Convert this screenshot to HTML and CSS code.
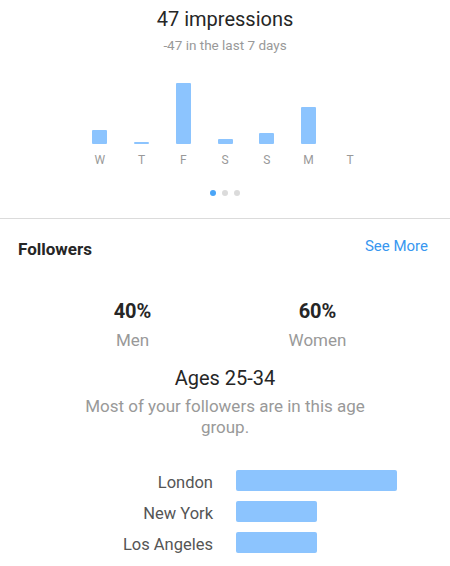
FILE: index.html
```html
<!DOCTYPE html>
<html>
<head>
<meta charset="utf-8">
<link rel="stylesheet" href="styles.css">
</head>
<body>
<section class="impressions">
  <h1 class="title">47 impressions</h1>
  <p class="subtitle">-47 in the last 7 days</p>
  <div class="chart">
    <div class="col"><div class="plot"><div class="bar" style="height:14px"></div></div><span class="day">W</span></div>
    <div class="col"><div class="plot"><div class="bar" style="height:2px"></div></div><span class="day">T</span></div>
    <div class="col"><div class="plot"><div class="bar" style="height:61px"></div></div><span class="day">F</span></div>
    <div class="col"><div class="plot"><div class="bar" style="height:5px"></div></div><span class="day">S</span></div>
    <div class="col"><div class="plot"><div class="bar" style="height:11px"></div></div><span class="day">S</span></div>
    <div class="col"><div class="plot"><div class="bar" style="height:37px"></div></div><span class="day">M</span></div>
    <div class="col"><div class="plot"><div class="bar" style="height:0px"></div></div><span class="day">T</span></div>
  </div>
  <div class="dots">
    <span class="dot active"></span><span class="dot"></span><span class="dot"></span>
  </div>
</section>
<section class="followers">
  <div class="header">
    <h2 class="heading">Followers</h2>
    <a class="see-more">See More</a>
  </div>
  <div class="gender">
    <div class="stat"><div class="pct">40%</div><div class="label">Men</div></div>
    <div class="stat"><div class="pct">60%</div><div class="label">Women</div></div>
  </div>
  <h3 class="ages">Ages 25-34</h3>
  <p class="desc">Most of your followers are in this age group.</p>
  <div class="cities">
    <span class="city">London</span><div class="track"><div class="cbar" style="width:100%"></div></div>
    <span class="city">New York</span><div class="track"><div class="cbar" style="width:50%"></div></div>
    <span class="city">Los Angeles</span><div class="track"><div class="cbar" style="width:50%"></div></div>
  </div>
</section>
</body>
</html>
```
FILE: styles.css
```css
* { box-sizing: border-box; }
html, body { margin: 0; padding: 0; background: #fff; }
body {
  width: 450px;
  font-family: Roboto, "Liberation Sans", sans-serif;
  color: #262626;
  overflow: hidden;
}
.impressions {
  padding-top: 7px;
  border-bottom: 1px solid #dbdbdb;
  padding-bottom: 22px;
  text-align: center;
}
.title {
  margin: 0;
  font-size: 20px;
  line-height: 24px;
  font-weight: 400;
  color: #262626;
}
.subtitle {
  margin: 6px 0 0;
  font-size: 13.5px;
  line-height: 16px;
  color: #999;
}
.chart {
  width: 292px;
  margin: 21px auto 0;
  display: flex;
}
.col {
  flex: 1;
  display: flex;
  flex-direction: column;
  align-items: center;
}
.plot {
  height: 70px;
  display: flex;
  align-items: flex-end;
}
.bar {
  width: 15px;
  background: #8cc4fe;
  border-radius: 1px;
}
.day {
  margin-top: 9px;
  font-size: 12px;
  line-height: 14px;
  color: #999;
}
.dots {
  margin-top: 23px;
  display: flex;
  justify-content: center;
  gap: 6px;
}
.dot {
  width: 6px;
  height: 6px;
  border-radius: 50%;
  background: #dbdbdb;
}
.dot.active { background: #4aa5f7; }

.followers { padding-top: 20px; }
.header {
  display: flex;
  justify-content: space-between;
  align-items: flex-start;
  padding: 0 22px 0 18px;
}
.heading {
  margin: 0;
  font-size: 17px;
  line-height: 20px;
  font-weight: 700;
  color: #262626;
}
.see-more {
  margin-top: -3px;
  font-size: 15px;
  line-height: 20px;
  color: #3897f0;
}
.gender {
  display: flex;
  padding: 0 40px;
  margin-top: 41px;
}
.stat { flex: 1; text-align: center; }
.pct {
  font-size: 20px;
  line-height: 22px;
  font-weight: 700;
  color: #262626;
}
.label {
  margin-top: 8px;
  font-size: 17px;
  line-height: 20px;
  color: #999;
}
.ages {
  margin: 16px 0 0;
  text-align: center;
  font-size: 20px;
  line-height: 24px;
  font-weight: 400;
  color: #262626;
}
.desc {
  margin: 6px auto 0;
  width: 300px;
  text-align: center;
  font-size: 17px;
  line-height: 21px;
  color: #999;
}
.cities {
  margin-top: 32px;
  display: grid;
  grid-template-columns: 213px 161px;
  column-gap: 23px;
  row-gap: 10px;
}
.city {
  text-align: right;
  font-size: 16.5px;
  line-height: 21px;
  padding-top: 2px;
  color: #555;
  height: 21px;
}
.track { height: 21px; }
.cbar {
  height: 100%;
  background: #8cc4fe;
  border-radius: 2px;
}
```
